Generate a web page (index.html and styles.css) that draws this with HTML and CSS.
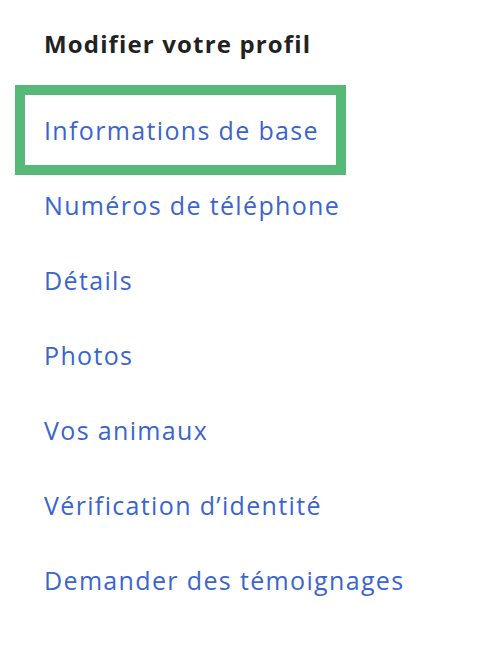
FILE: index.html
```html
<!DOCTYPE html>
<html lang="fr">
<head>
<meta charset="utf-8">
<link rel="stylesheet" href="styles.css">
</head>
<body>
<nav class="menu">
  <h2 class="title">Modifier votre profil</h2>
  <ul class="list">
    <li class="item active"><a href="#">Informations de base</a></li>
    <li class="item"><a href="#">Numéros de téléphone</a></li>
    <li class="item"><a href="#">Détails</a></li>
    <li class="item"><a href="#">Photos</a></li>
    <li class="item"><a href="#">Vos animaux</a></li>
    <li class="item"><a href="#">Vérification d’identité</a></li>
    <li class="item"><a href="#">Demander des témoignages</a></li>
  </ul>
</nav>
</body>
</html>
```
FILE: styles.css
```css
html, body {
  margin: 0;
  padding: 0;
  background: #ffffff;
}
body {
  font-family: "Open Sans", "Noto Sans", sans-serif;
  width: 490px;
  height: 652px;
}
.menu {
  padding: 27px 0 0 25px;
}
.title {
  margin: 0 0 0 19px;
  font-size: 24px;
  font-weight: 700;
  color: #222222;
  line-height: 34px;
  letter-spacing: 1.15px;
}
.list {
  list-style: none;
  margin: 34px 0 0 0;
  padding: 0;
  display: flex;
  flex-direction: column;
  gap: 5px;
}
.item {
  width: 311px;
  box-sizing: border-box;
  height: 70px;
  padding-left: 19px;
  display: flex;
  align-items: center;
  white-space: nowrap;
}
.item.active {
  outline: 10px solid #56b978;
}
.item a {
  color: #3b64d1;
  text-decoration: none;
  font-size: 25px;
  letter-spacing: 1.35px;
}
```
